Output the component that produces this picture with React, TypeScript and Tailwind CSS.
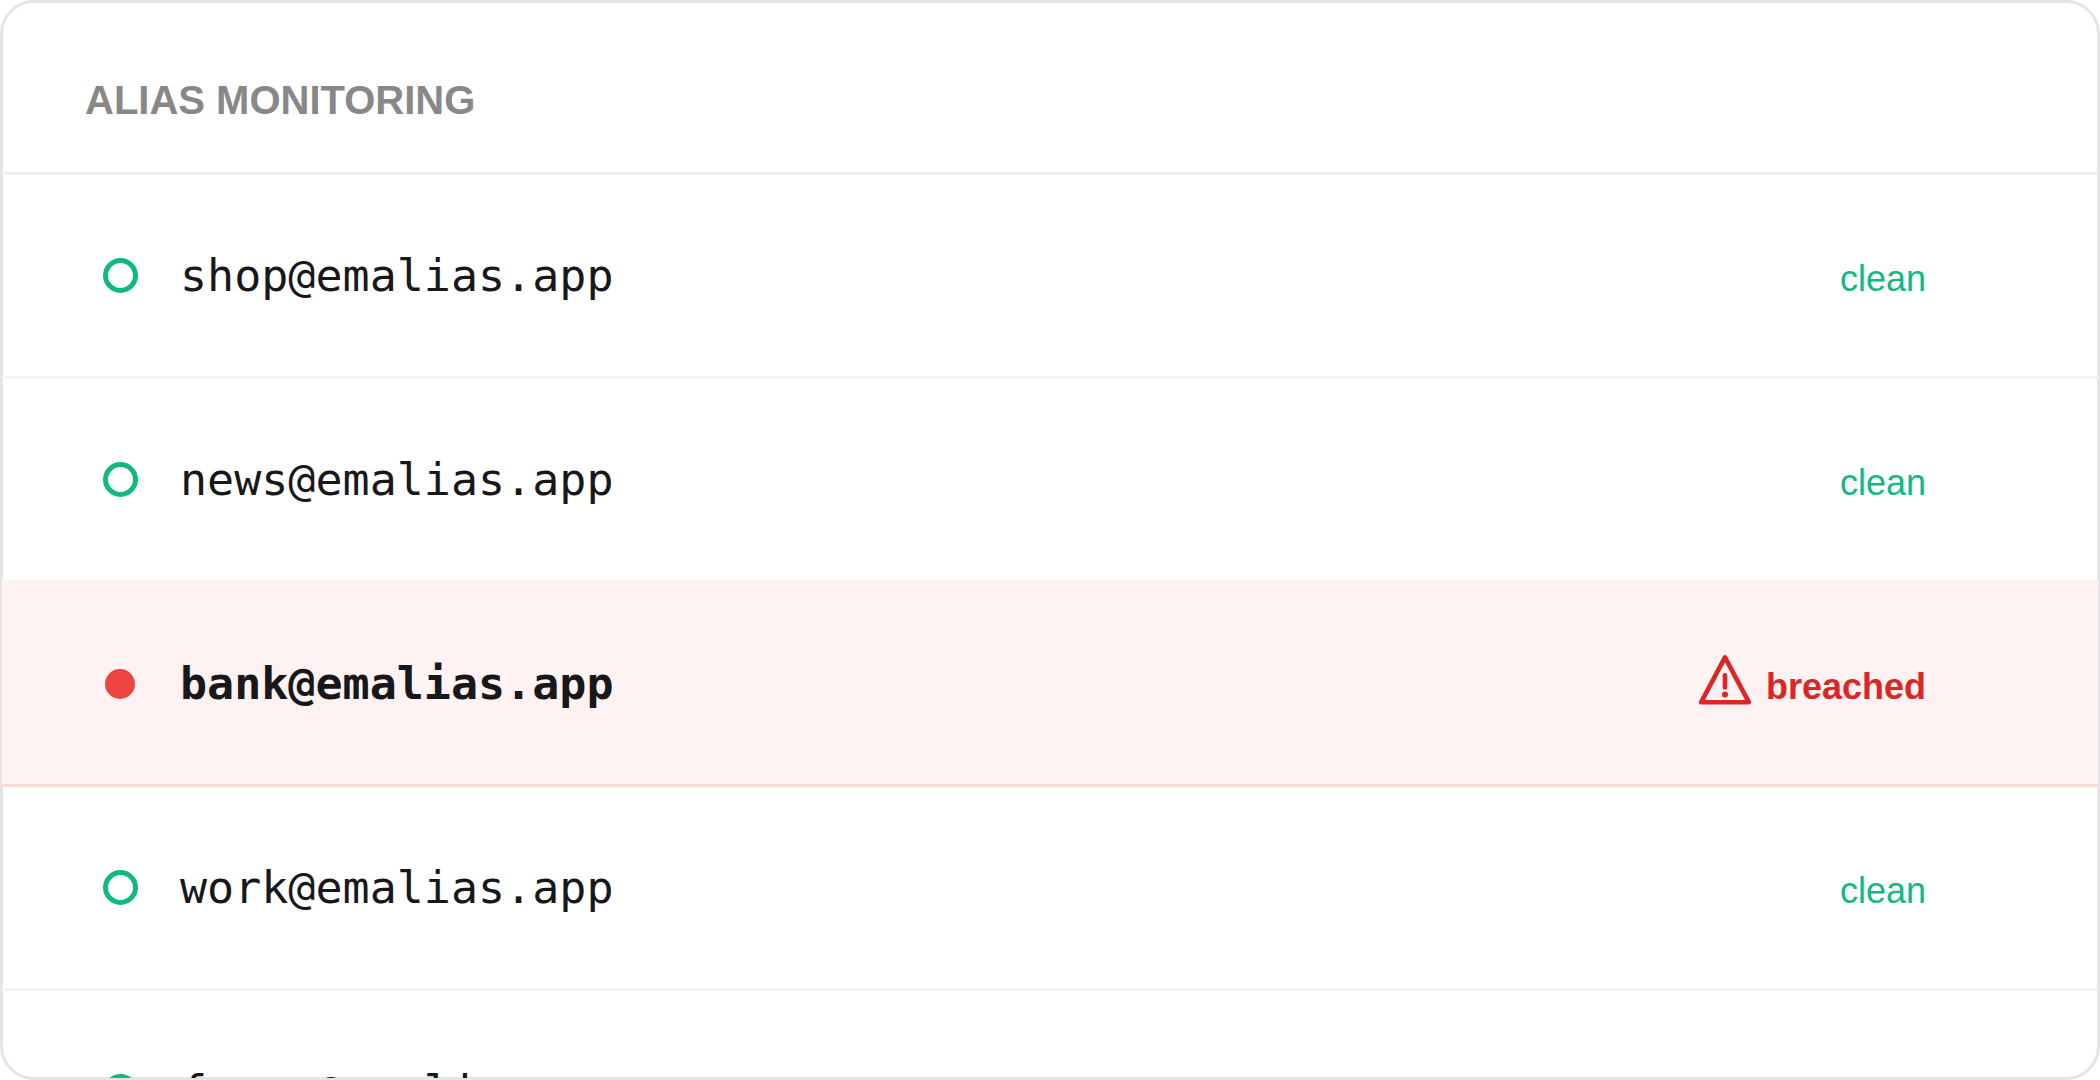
import React from "react";

type Alias = { email: string; breached?: boolean };

const aliases: Alias[] = [
  { email: "shop@emalias.app" },
  { email: "news@emalias.app" },
  { email: "bank@emalias.app", breached: true },
  { email: "work@emalias.app" },
  { email: "forum@emalias.app" },
];

function WarningIcon() {
  return (
    <svg
      className="mb-3"
      width="54"
      height="54"
      viewBox="0 0 54 54"
      fill="none"
      stroke="#dc2626"
      strokeWidth="4.6"
      strokeLinejoin="round"
      strokeLinecap="round"
      aria-hidden="true"
    >
      <path d="M27 3.4 50.8 48.2H3.2Z" />
      <path d="M27 21.4v12" />
      <circle cx="27" cy="40.6" r="3" fill="#dc2626" stroke="none" />
    </svg>
  );
}

function Row({ email, breached }: Alias) {
  return (
    <li
      className={
        breached
          ? "-mt-0.5 flex h-[206px] shrink-0 items-center border-b-3 border-[#fad9d9] bg-[#fef2f2] pt-0.5 pr-[172px] pl-[98px] font-bold"
          : "flex h-[204px] shrink-0 items-center border-b-3 border-[#f3f3f3] pr-[172px] pl-[98px]"
      }
    >
      <span className="flex w-10 justify-center">
        {breached ? (
          <span className="size-[30px] rounded-full bg-[#ef4444]" />
        ) : (
          <span className="size-[35px] rounded-full border-5 border-[#10b981]" />
        )}
      </span>
      <span className="ml-10 font-['DejaVu_Sans_Mono',monospace] text-[45px] leading-[54px] text-[#18181b]">
        {email}
      </span>
      <span
        className={
          breached
            ? "ml-auto flex items-center gap-3.5 pt-1.5 text-[36px] leading-[54px] text-[#dc2626]"
            : "ml-auto pt-1.5 text-[36px] leading-[54px] text-[#10b981]"
        }
      >
        {breached && <WarningIcon />}
        {breached ? "breached" : "clean"}
      </span>
    </li>
  );
}

export default function App() {
  return (
    <main className="flex h-screen flex-col overflow-clip rounded-[34px] border-3 border-[#e5e5e5] bg-white font-['Liberation_Sans',sans-serif] [overflow-clip-margin:1px]">
      <h1 className="-mx-px shrink-0 border-b-3 border-[#eeeeee] px-[83px] pt-[72px] pb-[47px] text-[40px] leading-[50px] font-bold text-[#888888]">
        ALIAS MONITORING
      </h1>
      <ul className="-mx-px flex flex-col">
        {aliases.map((a) => (
          <Row key={a.email} {...a} />
        ))}
      </ul>
    </main>
  );
}
